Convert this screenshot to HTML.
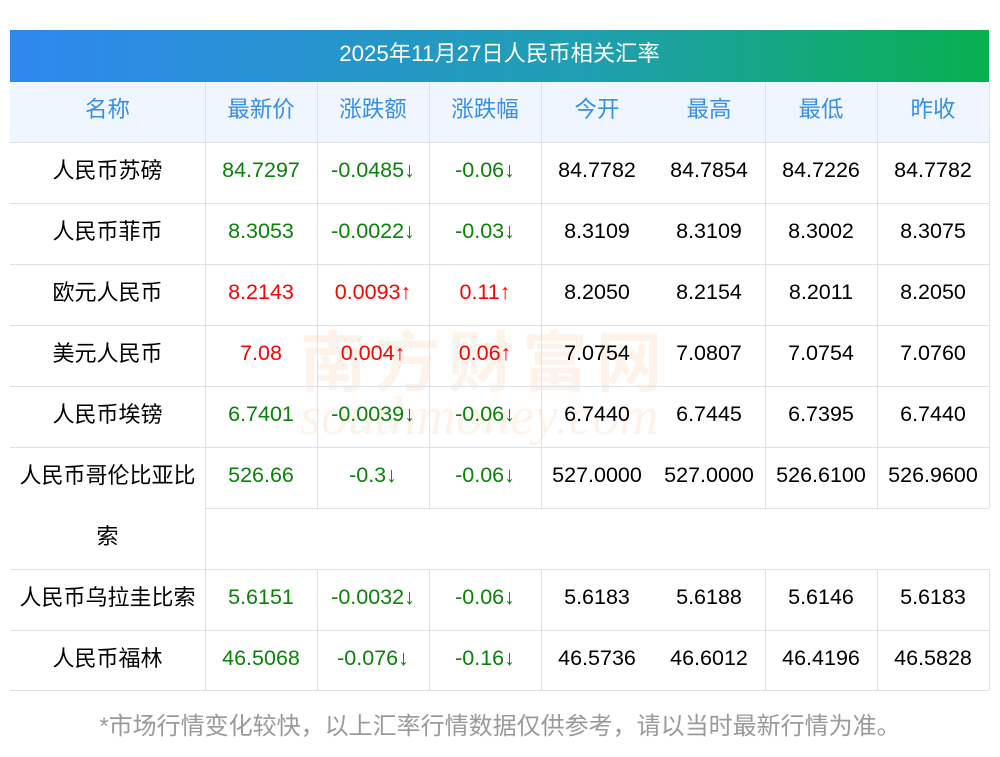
<!DOCTYPE html>
<html><head><meta charset="utf-8"><style>
body{margin:0;width:1000px;height:757px;background:#fff;position:relative;overflow:hidden;font-family:"Liberation Sans","Noto Sans CJK SC",sans-serif;font-size:21.5px}
.a{position:absolute}
.t{position:absolute;left:10px;top:30px;width:979px;height:52px;background:linear-gradient(90deg,#2f88ef,#1f9fb0 60%,#08b04e);color:#fff;text-align:center;line-height:48px;font-size:22.3px}
.hd{position:absolute;left:10px;top:82px;width:979px;height:60px;background:#f0f6ff}
.h{position:absolute;height:1px;background:#dde1ea}
.v{position:absolute;width:1px;background:#dde1ea}
.c{position:absolute;text-align:center;line-height:57px;height:61px;white-space:nowrap}
.n{font-size:22px}
.hh{font-size:22.5px}
.g{color:#0a820a}.r{color:#f00}.b{color:#3a8ee6}
</style></head><body>
<div class="t">2025年11月27日人民币相关汇率</div>
<div class="hd"></div>
<div class="a" style="left:300px;top:310px;font-size:66px;color:rgba(240,160,80,0.12);font-weight:bold;letter-spacing:8px">南方财富网</div>
<div class="a" style="left:300px;top:385px;font-size:54px;color:rgba(240,160,80,0.12);font-style:italic;font-family:'Liberation Serif',serif">southmoney.com</div>
<div id="g"></div>
<div class="a" style="left:0;width:1000px;top:706px;text-align:center;color:#9a9a9a;font-size:24px">*市场行情变化较快，以上汇率行情数据仅供参考，请以当时最新行情为准。</div>
<script>
var X=[10,205,317,429,541,653,765,877,989];
var rows=[
["名称","最新价","涨跌额","涨跌幅","今开","最高","最低","昨收","b","b","b"],
["人民币苏磅","84.7297","-0.0485↓","-0.06↓","84.7782","84.7854","84.7226","84.7782","g","g","g"],
["人民币菲币","8.3053","-0.0022↓","-0.03↓","8.3109","8.3109","8.3002","8.3075","g","g","g"],
["欧元人民币","8.2143","0.0093↑","0.11↑","8.2050","8.2154","8.2011","8.2050","r","r","r"],
["美元人民币","7.08","0.004↑","0.06↑","7.0754","7.0807","7.0754","7.0760","r","r","r"],
["人民币埃镑","6.7401","-0.0039↓","-0.06↓","6.7440","6.7445","6.7395","6.7440","g","g","g"],
["人民币哥伦比亚比","526.66","-0.3↓","-0.06↓","527.0000","527.0000","526.6100","526.9600","g","g","g"],
["人民币乌拉圭比索","5.6151","-0.0032↓","-0.06↓","5.6183","5.6188","5.6146","5.6183","g","g","g"],
["人民币福林","46.5068","-0.076↓","-0.16↓","46.5736","46.6012","46.4196","46.5828","g","g","g"]];
var Y=[81,142,203,264,325,386,447,569,630];
var h="";
for(var i=0;i<rows.length;i++){var y=Y[i];var R=rows[i];
for(var j=0;j<8;j++){var cl=j==0?(i==0?"b hh":"n"):(j<4?R[7+j]:(i==0?"b":""));if(i==0)cl+=" hh";
h+='<div class="c '+cl+'" style="left:'+X[j]+'px;width:'+(X[j+1]-X[j])+'px;top:'+y+'px">'+R[j]+'</div>';}
}
h+='<div class="c n" style="left:10px;width:195px;top:508px">索</div>';
[142,203,264,325,386,447,569,630,690].forEach(function(y){h+='<div class="h" style="left:10px;width:979px;top:'+y+'px"></div>';});
h+='<div class="h" style="left:205px;width:784px;top:508px"></div>';
var vx=[205,317,429,541,765,877,989];
vx.forEach(function(x){
 if(x==205){h+='<div class="v" style="left:205px;top:82px;height:608px"></div>';}
 else{h+='<div class="v" style="left:'+x+'px;top:82px;height:426px"></div><div class="v" style="left:'+x+'px;top:569px;height:121px"></div>';}
});
document.getElementById("g").innerHTML=h;
</script>
</body></html>
